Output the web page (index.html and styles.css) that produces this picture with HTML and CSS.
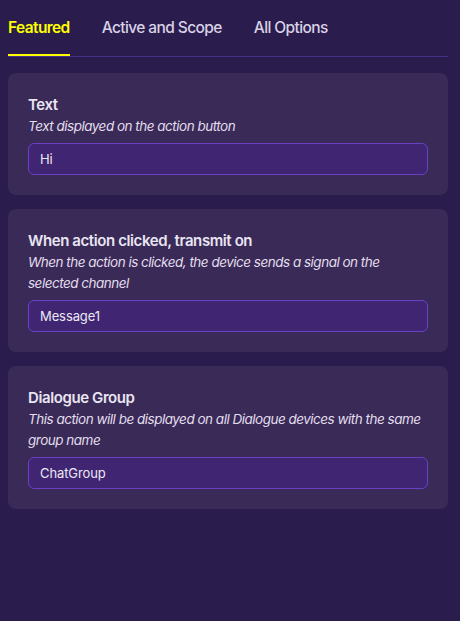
FILE: index.html
```html
<!DOCTYPE html>
<html>
<head>
<meta charset="utf-8">
<link rel="stylesheet" href="styles.css">
</head>
<body>
<div class="page">
  <nav class="tabs">
    <div class="tab active">Featured</div>
    <div class="tab">Active and Scope</div>
    <div class="tab">All Options</div>
  </nav>
  <div class="cards">
    <section class="card">
      <h2 class="title">Text</h2>
      <p class="desc">Text displayed on the action button</p>
      <div class="input">Hi</div>
    </section>
    <section class="card">
      <h2 class="title">When action clicked, transmit on</h2>
      <p class="desc">When the action is clicked, the device sends a signal on the selected channel</p>
      <div class="input">Message1</div>
    </section>
    <section class="card">
      <h2 class="title">Dialogue Group</h2>
      <p class="desc">This action will be displayed on all Dialogue devices with the same group name</p>
      <div class="input">ChatGroup</div>
    </section>
  </div>
</div>
</body>
</html>
```

FILE: styles.css
```css
html, body {
  margin: 0;
  padding: 0;
  background: #2a1c4d;
  font-family: Inter, "Noto Sans", sans-serif;
  color: #e8e3f2;
}
.page {
  padding: 0 12px 0 8px;
}
.tabs {
  display: flex;
  gap: 32px;
  border-bottom: 1px solid #472f8a;
  height: 57px;
  box-sizing: border-box;
  align-items: flex-start;
  padding-top: 18px;
}
.tab {
  font-size: 15.5px;
  font-weight: 500;
  letter-spacing: -0.6px;
  color: #d8d2e6;
  line-height: 20px;
  height: 38px;
  box-sizing: border-box;
}
.tab.active {
  color: #ffff00;
  font-weight: 600;
  border-bottom: 2px solid #ffff00;
  margin-bottom: -1px;
}
.cards {
  display: flex;
  flex-direction: column;
  gap: 14px;
  padding-top: 16px;
}
.card {
  background: #3a2a58;
  border-radius: 8px;
  padding: 21px 20px 20px;
}
.title {
  margin: 0;
  font-size: 15px;
  font-weight: 600;
  letter-spacing: -0.4px;
  line-height: 22px;
  color: #e9e5f2;
}
.desc {
  margin: 0 0 6px;
  font-size: 13.5px;
  font-style: italic;
  letter-spacing: -0.5px;
  line-height: 21px;
  color: #e2ddec;
}
.input {
  height: 32px;
  box-sizing: border-box;
  border: 1px solid #6942c4;
  border-radius: 6px;
  background: #3f2572;
  padding: 0 11px;
  font-size: 13px;
  letter-spacing: -0.1px;
  line-height: 30px;
  color: #ece8f4;
}
```
